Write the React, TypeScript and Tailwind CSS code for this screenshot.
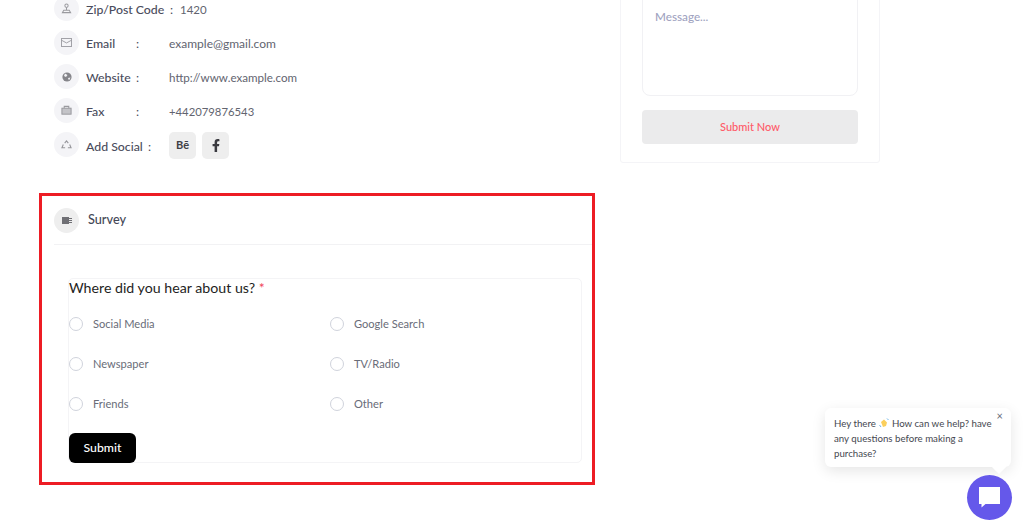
import React from "react";

const font = { fontFamily: '"Lato", "Liberation Sans", sans-serif' };

function IconCircle({ children, dark }: { children: React.ReactNode; dark?: boolean }) {
  return (
    <span className={`flex h-[25px] w-[25px] shrink-0 items-center justify-center rounded-full ${dark ? "bg-[#eeeeee]" : "bg-[#f4f4f7]"}`}>
      {children}
    </span>
  );
}

const ZipIcon = (
  <svg width="11" height="11" viewBox="0 0 12 12" fill="none" stroke="#9a9a9f" strokeWidth="1.1">
    <circle cx="6" cy="3" r="1.8" />
    <path d="M6 5v3M3 8h6l1.500 2.500h-9z" />
  </svg>
);
const MailIcon = (
  <svg width="11" height="9" viewBox="0 0 12 10" fill="none" stroke="#9a9a9f" strokeWidth="1">
    <rect x="0.5" y="0.5" width="11" height="9" />
    <path d="M0.5 2.500 6 5.500l5.500-3" />
  </svg>
);
const GlobeIcon = (
  <svg width="10" height="10" viewBox="0 0 10 10">
    <circle cx="5" cy="5" r="4.600" fill="#85858a" />
    <path d="M3 1.500 5.500 3 4 5 2 4zM6 6l2.500-.5L7 8.500z" fill="#f4f4f7" />
  </svg>
);
const FaxIcon = (
  <svg width="11" height="11" viewBox="0 0 12 12" fill="none" stroke="#9a9a9f" strokeWidth="1.1">
    <rect x="1" y="3.500" width="10" height="6.500" fill="#c4c4c8" />
    <path d="M3.500 3.500V1.500h5v2" />
  </svg>
);
const RecycleIcon = (
  <svg width="11" height="10" viewBox="0 0 12 11" fill="none" stroke="#96969b" strokeWidth="1.200">
    <path d="M4 3.500 6 1l2 2.500M9.500 5l1.500 3.500H7.500M4.500 8.500H1L2.500 5" />
  </svg>
);

function InfoRow({ icon, label, value, valueClass }: { icon: React.ReactNode; label: string; value: string; valueClass: string }) {
  return (
    <div className="flex h-[25px] items-center">
      <IconCircle>{icon}</IconCircle>
      <div className="ml-[7px] flex items-baseline pt-[3px]">
        <span className="w-[50px] whitespace-nowrap text-[12.300px] font-medium text-[#4a4c5c]">{label}</span>
        <span className="w-[33px] text-[12.300px] text-[#4a4c5c]">:</span>
        <span className={`whitespace-nowrap text-[#62646f] ${valueClass}`}>{value}</span>
      </div>
    </div>
  );
}

function Radio({ label }: { label: string }) {
  return (
    <label className="flex h-[14px] items-center gap-[10px]">
      <span className="h-[14px] w-[14px] shrink-0 rounded-full border-[1.500px] border-[#d0d3dc] bg-white" />
      <span className="text-[11.100px] text-[#696c78]">{label}</span>
    </label>
  );
}

const Wave = (
  <svg className="mx-[3px] inline-block align-[-1px]" width="10" height="10" viewBox="0 0 10 10">
    <path d="M2 4 5 1.500l3 3-1 3.500-3 1z" fill="#fbcf5c" />
    <path d="M8 .5l1.500 1.500M.5 7l1.500 2" stroke="#6fb5e8" strokeWidth="1" />
  </svg>
);

export default function App() {
  return (
    <div className="relative h-[529px] w-[1024px] overflow-hidden bg-white" style={font}>
      <div className="-mt-[4px] flex items-start pl-[39px]">
        {/* Left column */}
        <div className="w-[556px]">
          <div className="flex flex-col gap-[9px] pl-[15px]">
            <div className="flex h-[25px] items-center">
              <IconCircle>{ZipIcon}</IconCircle>
              <div className="ml-[7px] flex items-baseline pt-[3px]">
                <span className="w-[84px] whitespace-nowrap text-[12.300px] font-medium text-[#4a4c5c]">Zip/Post Code</span>
                <span className="w-[10px] text-[12.300px] text-[#4a4c5c]">:</span>
                <span className="text-[11.500px] text-[#62646f]">1420</span>
              </div>
            </div>
            <InfoRow icon={MailIcon} label="Email" value="example@gmail.com" valueClass="text-[12px]" />
            <InfoRow icon={GlobeIcon} label="Website" value="http://www.example.com" valueClass="text-[11.600px]" />
            <InfoRow icon={FaxIcon} label="Fax" value="+442079876543" valueClass="text-[11.300px]" />
            <div className="flex h-[25px] items-start">
              <IconCircle>{RecycleIcon}</IconCircle>
              <span className="ml-[7px] w-[62px] whitespace-nowrap pt-[6px] text-[12.300px] font-medium text-[#4a4c5c]">Add Social</span>
              <span className="w-[21px] pt-[6px] text-[12.300px] text-[#4a4c5c]">:</span>
              <div className="flex gap-[6px]">
                <span className="flex h-[27px] w-[27px] items-center justify-center rounded-[5px] bg-[#eeeeee] text-[11px] font-bold text-[#3f3f45]">Bē</span>
                <span className="flex h-[27px] w-[27px] items-center justify-center rounded-[5px] bg-[#eeeeee]">
                  <svg width="8" height="13" viewBox="0 0 320 512" fill="#3a3a40">
                    <path d="M279 288l14-93h-89v-60c0-25 12-50 52-50h41V6s-37-6-72-6c-73 0-121 44-121 125v70H23v93h81v224h100V288z" />
                  </svg>
                </span>
              </div>
            </div>
          </div>

          {/* Survey */}
          <section className="mt-[36px] h-[292px] border-[3px] border-[#ed1c24] pl-[12px]">
            <div className="flex h-[49px] items-center border-b border-[#f2f2f4]">
              <IconCircle dark>
                <svg width="10" height="7" viewBox="0 0 10 7" fill="#6f6f74">
                  <rect width="7" height="7" />
                  <rect x="7" y="1" width="3" height="1" />
                  <rect x="7" y="3" width="3" height="1" />
                  <rect x="7" y="5" width="3" height="1" />
                </svg>
              </IconCircle>
              <span className="ml-[9px] text-[12.700px] font-medium text-[#454857]">Survey</span>
            </div>
            <div className="ml-[14px] mr-[10px] mt-[33px] h-[185px] rounded-[5px] border border-[#f4f4f6]">
              <div className="text-[14.200px] leading-[18px] text-[#1e1e22]">
                Where did you hear about us? <span className="text-[#f0435a]">*</span>
              </div>
              <div className="mt-[20px] grid grid-cols-[261px_1fr] gap-y-[26px]">
                <Radio label="Social Media" />
                <Radio label="Google Search" />
                <Radio label="Newspaper" />
                <Radio label="TV/Radio" />
                <Radio label="Friends" />
                <Radio label="Other" />
              </div>
              <button className="mt-[22px] flex h-[30px] w-[67px] items-center justify-center rounded-[6px] bg-black text-[12.300px] font-medium text-white">
                Submit
              </button>
            </div>
          </section>
        </div>

        {/* Right column */}
        <aside className="-mt-[40px] ml-[25px] h-[207px] w-[260px] rounded-[3px] border border-[#f4f4f7] px-[21px]">
          <div className="h-[139px] rounded-[8px] border border-[#f1f1f4] px-[12px] pt-[50px] text-[11.700px] font-medium text-[#a0a3bf]">
            Message...
          </div>
          <button className="mt-[14px] flex h-[34px] w-full items-center justify-center rounded-[4px] bg-[#ebebec] text-[11px] font-medium text-[#ff5a68]">
            Submit Now
          </button>
        </aside>
      </div>

      {/* Chat widget */}
      <div className="absolute left-[825px] top-[408px] h-[59px] w-[186px] rounded-[6px] bg-white py-[8px] pl-[9px] pr-[10px] text-[9.700px] leading-[15px] text-[#45474f] shadow-[0_4px_14px_rgba(0,0,0,0.1)]">
        <div>
          Hey there{Wave}How can we help? have any questions before making a purchase?
        </div>
        <span className="absolute right-[8px] top-[2px] text-[11px] leading-[12px] text-[#666a78]">×</span>
        <span className="absolute bottom-[-5px] right-[7px] h-[10px] w-[10px] rotate-45 bg-white" />
      </div>
      <div className="absolute left-[967px] top-[475px] flex h-[45px] w-[45px] items-center justify-center rounded-full bg-[#6558ea]">
        <svg width="23" height="23" viewBox="0 0 23 23" fill="white">
          <path d="M1 1h21v17H7.500L3.500 21.500V18H1z" />
        </svg>
      </div>
    </div>
  );
}
